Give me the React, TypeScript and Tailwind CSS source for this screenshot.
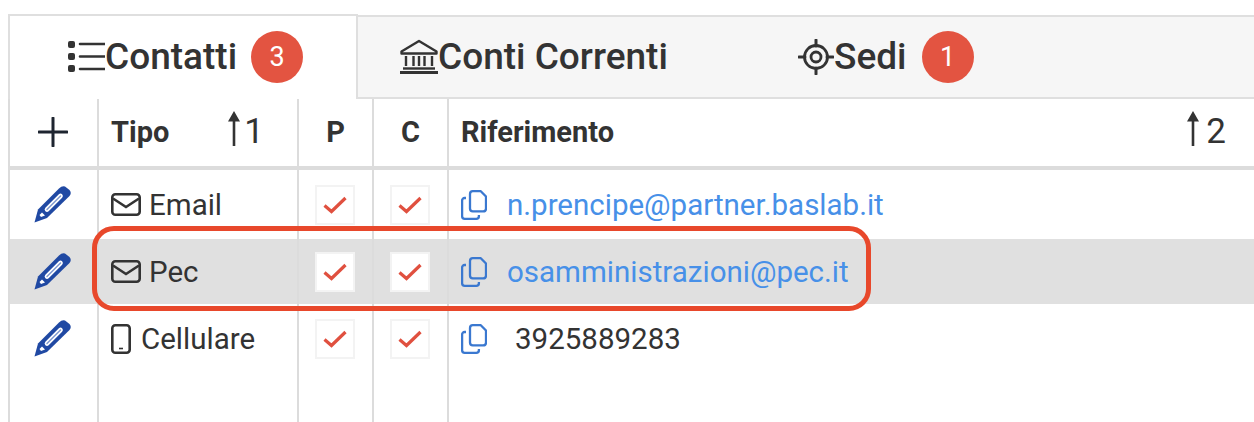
import React from "react";

const ListIcon = () => (
  <svg width="37" height="32" viewBox="0 0 37 32" className="shrink-0">
    <g fill="#333">
      <rect x="0" y="0" width="7" height="7" rx="2" />
      <rect x="0" y="12" width="7" height="7" rx="2" />
      <rect x="0" y="24" width="7" height="7" rx="2" />
    </g>
    <g stroke="#333" strokeWidth="2.6" strokeLinecap="round">
      <path d="M12 3h25M12 15.5h25M12 28h25" />
    </g>
  </svg>
);

const BankIcon = () => (
  <svg width="38" height="36" viewBox="0 0 38 36" className="shrink-0">
    <g fill="none" stroke="#333" strokeWidth="2.4">
      <path d="M1.5 12.5 19 2l17.5 10.5v2h-35z" strokeLinejoin="round" />
      <path d="M6 17v10M13.5 17v10M24.5 17v10M32 17v10M19 17v10" />
      <path d="M3 29.5h32" />
    </g>
    <path d="M0 33.5h38" stroke="#333" strokeWidth="3" />
  </svg>
);

const TargetIcon = () => (
  <svg width="36" height="36" viewBox="0 0 36 36" className="shrink-0">
    <g fill="none" stroke="#333">
      <circle cx="18" cy="18" r="11.5" strokeWidth="2.8" />
      <circle cx="18" cy="18" r="5" strokeWidth="2.8" />
      <path d="M18 1v6M18 29v6M1 18h6M29 18h6" strokeWidth="3" strokeLinecap="round" />
    </g>
  </svg>
);

const SortArrow = () => (
  <svg width="12" height="36" viewBox="0 0 12 36" className="shrink-0">
    <path d="M6 0 12 10.5H7.3V35H4.7V10.5H0z" fill="#333" />
  </svg>
);

const Plus = () => (
  <svg width="30" height="30" viewBox="0 0 30 30">
    <path d="M15 1v28M1 15h28" stroke="#1e2530" strokeWidth="3" strokeLinecap="round" />
  </svg>
);

const Pencil = () => (
  <svg width="38" height="38" viewBox="0 0 38 38">
    <path
      d="M25 3.5Q28 .5 31 1.5L35.5 5Q38 8 35.5 11L13 33 .5 37.5 4 24.5z"
      fill="#2049a3"
    />
    <path d="M13 24.5 26.5 11" stroke="#fff" strokeWidth="4.6" strokeLinecap="round" />
    <path d="M13 24.5 26.5 11" stroke="#7f98cf" strokeWidth="1.4" strokeLinecap="round" />
    <path d="M5.5 30 8 27.5l3 3L7 32z" fill="#fff" />
  </svg>
);

const Mail = () => (
  <svg width="30" height="23" viewBox="0 0 30 23" className="shrink-0">
    <rect x="1.3" y="1.3" width="27.4" height="20.4" rx="3" fill="none" stroke="#333" strokeWidth="2.6" />
    <path d="M2 5.5 15 14 28 5.5" fill="none" stroke="#333" strokeWidth="2.6" />
  </svg>
);

const Phone = () => (
  <svg width="20" height="30" viewBox="0 0 20 30" className="shrink-0">
    <rect x="1.3" y="1.3" width="17.4" height="27.4" rx="3" fill="none" stroke="#333" strokeWidth="2.6" />
    <path d="M8 24.5h4" stroke="#333" strokeWidth="1.6" />
  </svg>
);

const Copy = () => (
  <svg width="26" height="30" viewBox="0 0 26 30" className="shrink-0">
    <g fill="none" stroke="#3a78d0" strokeWidth="2.3" strokeLinejoin="round">
      <path d="M9 4.5V4a2.8 2.8 0 0 1 2.8-2.8h8L25 6.5v12a2.8 2.8 0 0 1-2.8 2.8H11.8A2.8 2.8 0 0 1 9 18.5z" />
      <path d="M5 8H3.5a2.4 2.4 0 0 0-2.4 2.4v15.8a2.6 2.6 0 0 0 2.6 2.6h11.6a2.6 2.6 0 0 0 2.6-2.6V25" />
    </g>
  </svg>
);

const Check = () => (
  <div className="flex h-[40px] w-[40px] items-center justify-center border-2 border-[#f3f3f3] bg-white">
    <svg width="24" height="18" viewBox="0 0 24 18">
      <path d="M1.5 9.5 8.5 15.5 22.5 2" fill="none" stroke="#e0503f" strokeWidth="3.2" />
    </svg>
  </div>
);

const Badge = ({ n }: { n: string }) => (
  <span className="flex h-[52px] w-[52px] shrink-0 items-center justify-center rounded-full bg-[#e35441] text-[27px] font-normal text-white">
    {n}
  </span>
);

const line = "border-r-2 border-[#dcdcdc]";
const gridCols = "grid grid-cols-[89px_200px_75px_75px_1fr]";

type Row = {
  icon: React.ReactNode;
  tipo: string;
  gap: string;
  value: string;
  link: boolean;
  gray?: boolean;
};

const rows: Row[] = [
  { icon: <Mail />, tipo: "Email", gap: "gap-[8px]", value: "n.prencipe@partner.baslab.it", link: true },
  { icon: <Mail />, tipo: "Pec", gap: "gap-[8px]", value: "osamministrazioni@pec.it", link: true, gray: true },
  { icon: <Phone />, tipo: "Cellulare", gap: "gap-[10px]", value: "3925889283", link: false },
];

export default function App() {
  return (
    <div className="relative h-[422px] w-[1254px] overflow-hidden bg-white pl-[8px] pt-[14px] [font-family:Roboto,sans-serif] text-[#333]">
      <div className="flex h-[85px]">
        <div className="flex w-[350px] shrink-0 items-center border-2 border-b-0 border-[#dfdfdf] pb-[1px] pl-[58px] text-[37px] font-medium">
          <ListIcon />
          <span>Contatti</span>
          <span className="ml-[14px]">
            <Badge n="3" />
          </span>
        </div>
        <div className="mt-[1px] flex flex-1 items-center border-y-2 border-[#dfdfdf] bg-[#f6f6f6] text-[37px] font-medium">
          <div className="flex w-[398px] items-center pl-[42px]">
            <BankIcon />
            <span>Conti Correnti</span>
          </div>
          <div className="flex items-center pl-[42px]">
            <TargetIcon />
            <span>Sedi</span>
            <span className="ml-[15px]">
              <Badge n="1" />
            </span>
          </div>
        </div>
      </div>

      <div className="flex h-[323px] flex-col border-l-2 border-[#dcdcdc]">
        <div className={`${gridCols} h-[71px] shrink-0 border-b-4 border-[#dcdcdc] text-[29px] font-bold`}>
          <div className={`${line} flex items-center justify-center pb-[2px] pr-[2px]`}>
            <Plus />
          </div>
          <div className={`${line} flex items-center pl-[12px]`}>
            <span>Tipo</span>
            <span className="ml-auto mr-[33px] flex items-center gap-[4px] pb-[7px] text-[35px] font-normal leading-none">
              <SortArrow />
              <span className="pt-[4px]">1</span>
            </span>
          </div>
          <div className={`${line} flex items-center justify-center`}>P</div>
          <div className={`${line} flex items-center justify-center`}>C</div>
          <div className="flex items-center pl-[12px]">
            <span>Riferimento</span>
            <span className="ml-auto mr-[28px] flex items-center gap-[7px] pb-[7px] text-[35px] font-normal leading-none">
              <SortArrow />
              <span className="pt-[4px]">2</span>
            </span>
          </div>
        </div>

        {rows.map((r) => {
          const bg = r.gray ? "bg-[#e0e0e0]" : "bg-white";
          return (
            <div key={r.tipo} className={`${gridCols} h-[67px] shrink-0 text-[29.5px]`}>
              <div className={`${line} pt-[2px]`}>
                <div className={`${bg} flex h-full items-center justify-center pb-[2px] pr-[2px]`}>
                  <Pencil />
                </div>
              </div>
              <div className={`${line} pt-[2px]`}>
                <div className={`${bg} flex h-full items-center ${r.gap} pl-[12px]`}>
                  {r.icon}
                  <span className="pt-[1px]">{r.tipo}</span>
                </div>
              </div>
              <div className={`${line} pt-[2px]`}>
                <div className={`${bg} flex h-full items-center justify-center pr-[2px]`}>
                  <Check />
                </div>
              </div>
              <div className={`${line} pt-[2px]`}>
                <div className={`${bg} flex h-full items-center justify-center pr-[2px]`}>
                  <Check />
                </div>
              </div>
              <div className="pt-[2px]">
                <div className={`${bg} flex h-full items-center pl-[12px]`}>
                  <Copy />
                  {r.link ? (
                    <span className="ml-[20px] pt-[1px] text-[#4790e8]">{r.value}</span>
                  ) : (
                    <span className="ml-[28px] pt-[1px]">{r.value}</span>
                  )}
                </div>
              </div>
            </div>
          );
        })}

        <div className={`${gridCols} flex-1`}>
          <div className={line} />
          <div className={line} />
          <div className={line} />
          <div className={line} />
          <div />
        </div>
      </div>

      <div className="absolute left-[92px] top-[226px] h-[85px] w-[779px] rounded-[22px] border-[5px] border-[#e8482b]" />
    </div>
  );
}
